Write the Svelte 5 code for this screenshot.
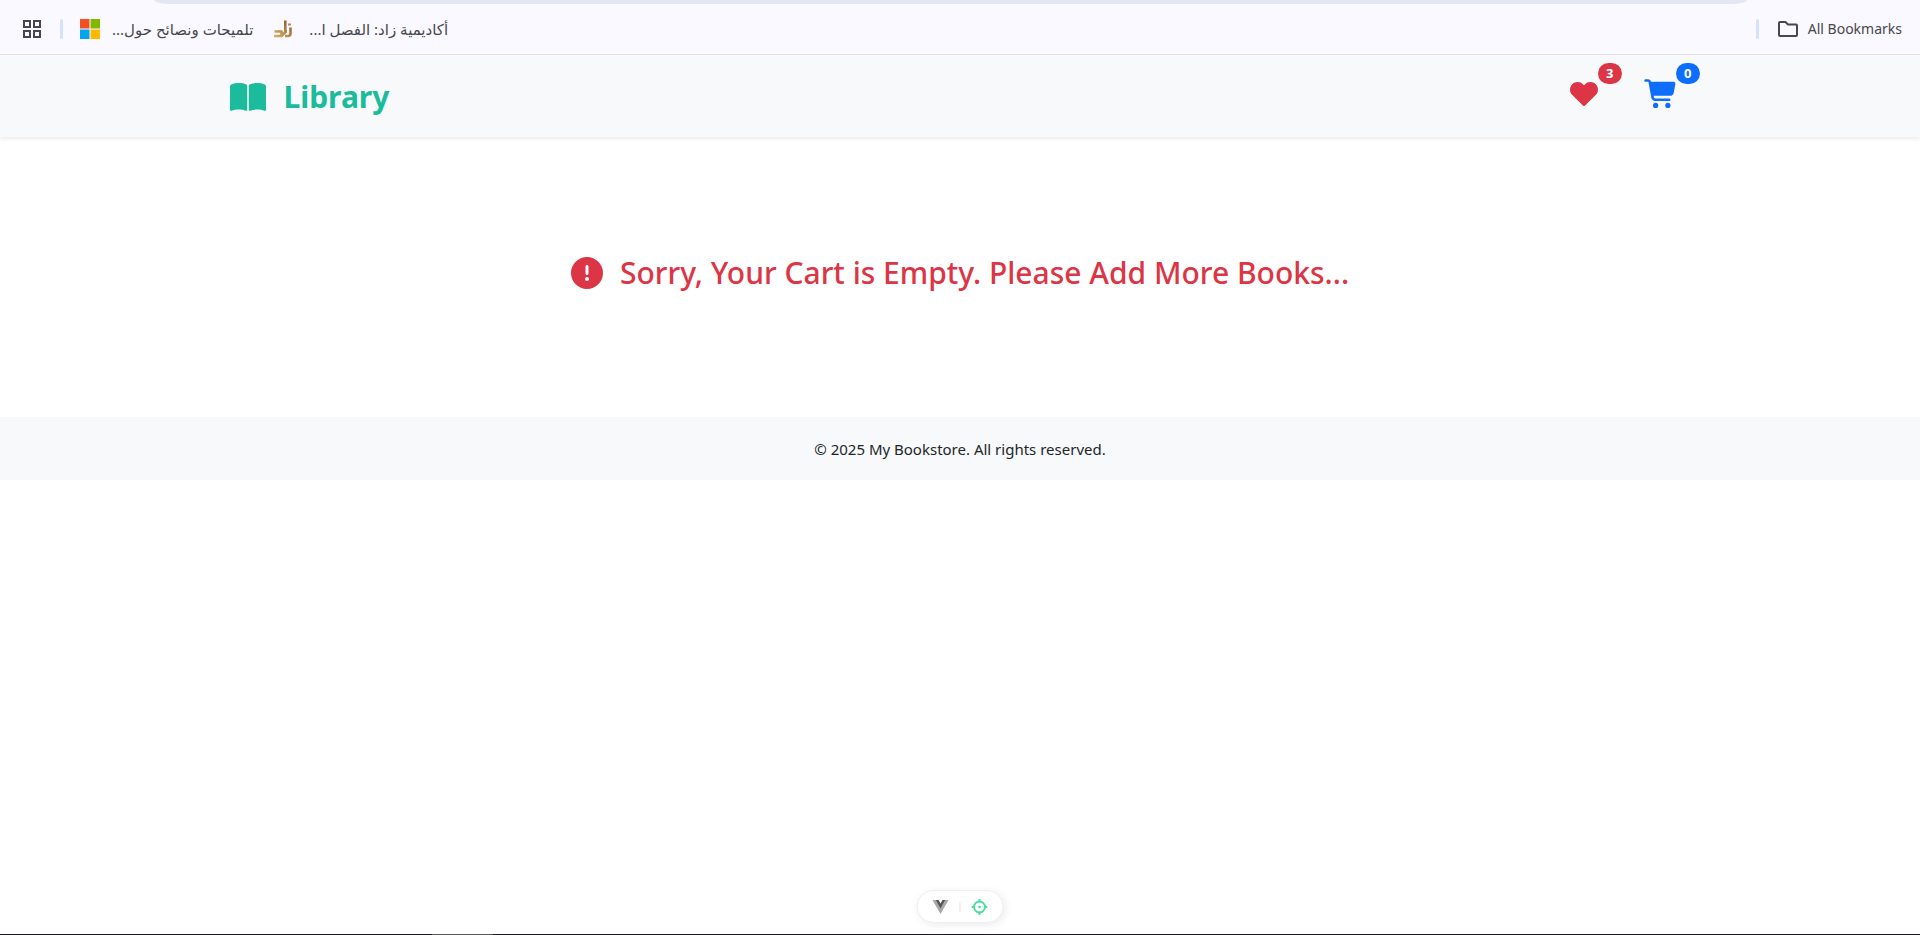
<script>
  const wishlistCount = 3;
  const cartCount = 0;
</script>

<div class="page">
  <nav class="bookmarks" aria-label="Bookmarks">
    <div class="omnibox-edge"></div>
    <button class="apps" aria-label="Apps">
      <svg viewBox="0 0 18 18" width="18" height="18" fill="none" stroke="#47474c" stroke-width="2">
        <rect x="1" y="1" width="6" height="6" /><rect x="11" y="1" width="6" height="6" />
        <rect x="1" y="11" width="6" height="6" /><rect x="11" y="11" width="6" height="6" />
      </svg>
    </button>
    <span class="divider"></span>
    <a class="bookmark first" href="#tips">
      <svg viewBox="0 0 20 20" width="20" height="20" aria-hidden="true">
        <path fill="#f25022" d="M0 0h9.500v9.500H0z" /><path fill="#7fba00" d="M10.500 0H20v9.500h-9.500z" />
        <path fill="#00a4ef" d="M0 10.500h9.500V20H0z" /><path fill="#ffb900" d="M10.500 10.500H20V20h-9.500z" />
      </svg>
      <span dir="rtl">تلميحات ونصائح حول...</span>
    </a>
    <a class="bookmark second" href="#academy">
      <svg viewBox="0 0 20 20" width="20" height="20" fill="none" aria-hidden="true">
        <defs>
          <linearGradient id="gold" gradientUnits="userSpaceOnUse" x1="2" y1="19" x2="15" y2="3">
            <stop offset="0" stop-color="#dcb468" /><stop offset="1" stop-color="#985f2e" />
          </linearGradient>
        </defs>
        <g stroke="url(#gold)" stroke-width="2.600" stroke-linejoin="round">
          <path d="M1.500 12.500h7v4.500H1" />
          <path d="M12.300 1.500V13L8.500 17" />
          <path d="M12 12.500h2" />
          <path d="M17.500 8.500v6q0 2.500-2.500 2.500h-3" />
        </g>
        <path d="M15 4.500h3v2h-3z" fill="#b98b58" />
      </svg>
      <span dir="rtl">أكاديمية زاد: الفصل ا...</span>
    </a>
    <span class="divider end"></span>
    <button class="all">
      <svg viewBox="0 0 20 16" width="20" height="16" fill="none" stroke="#47474c" stroke-width="2" stroke-linejoin="round" aria-hidden="true">
        <path d="M1 2q0-1 1-1h5.500l2.500 2.500h8q1 0 1 1V14q0 1-1 1H2q-1 0-1-1z" />
      </svg>
      <span>All Bookmarks</span>
    </button>
  </nav>

  <header>
    <a class="brand" href="#home">
      <svg viewBox="0 0 36 28" width="36" height="28" fill="currentColor" aria-hidden="true">
        <path d="M0 3.200Q0 2 1.200 1.500C6-.4 12-.5 16 1.300q1.200.6 1.200 1.900V27q0 1.200-1.200.7c-4-1.700-10-1.700-14.600 0Q0 28.200 0 27z" />
        <path d="M36 3.200Q36 2 34.800 1.500C30-.4 24-.5 20 1.300q-1.200.6-1.200 1.900V27q0 1.200 1.200.7c4-1.700 10-1.700 14.600 0q1.400.5 1.400-.7z" />
      </svg>
      <span>Library</span>
    </a>
    <div class="actions">
      <a class="action wish" href="#wishlist" aria-label="Wishlist">
        <svg viewBox="0 0 28 28" width="28" height="28" fill="currentColor">
          <path d="M12.900 25.600L2.300 15.100C-.7 12.100-.7 7.300 2.200 4.300c2.900-3 7.800-3 10.700-.1L14 5.300l1.100-1.100c2.900-2.900 7.800-2.900 10.700.1 2.900 3 2.900 7.800-.1 10.800L15.100 25.600q-1.100 1-2.200 0z" />
        </svg>
        <span class="badge">{wishlistCount}</span>
      </a>
      <a class="action cart" href="#cart" aria-label="Cart">
        <svg viewBox="0 0 576 512" width="32" height="28" fill="currentColor" overflow="visible">
          <path d="M24-16C10.700-16 0-5.300 0 8s10.700 24 24 24h45.300c3.900 0 7.200 2.800 7.900 6.600l52.100 286.300c6.200 34.200 36 59.100 70.800 59.100H456c13.300 0 24-10.700 24-24s-10.700-24-24-24H200.100c-11.600 0-21.500-8.300-23.600-19.700l-5.100-28.300H475c30.800 0 57.200-21.900 62.900-52.200l31-157.900C572.600 50.200 557.500 32 537.400 32H124.700l-.4-2c-4.800-26.600-28-46-55.100-46H24zM208 512a48 48 0 1 0 0-96 48 48 0 1 0 0 96zm224 0a48 48 0 1 0 0-96 48 48 0 1 0 0 96z" />
        </svg>
        <span class="badge">{cartCount}</span>
      </a>
    </div>
  </header>

  <main>
    <h2>
      <svg viewBox="0 0 512 512" width="32" height="32" fill="currentColor" aria-hidden="true">
        <path d="M256 512A256 256 0 1 0 256 0a256 256 0 1 0 0 512zm0-384c13.300 0 24 10.700 24 24v112c0 13.300-10.700 24-24 24s-24-10.700-24-24V152c0-13.300 10.700-24 24-24zm-32 224a32 32 0 1 1 64 0 32 32 0 1 1-64 0z" />
      </svg>
      <span>Sorry, Your Cart is Empty. Please Add More Books...</span>
    </h2>
  </main>

  <footer>© 2025 My Bookstore. All rights reserved.</footer>

  <div class="taskbar-edge"><span></span></div>

  <div class="devtools">
    <button aria-label="Toggle devtools">
      <svg viewBox="0 0 16 14" width="16" height="14">
        <path fill="#a8a8a8" d="M0 0h3.500L8 7.500 12.500 0H16L8 14z" />
        <path fill="#555" d="M3.300 0H6l2 3.500L10 0h2.700L8 8.500z" />
      </svg>
    </button>
    <span class="bar"></span>
    <button aria-label="Inspect component">
      <svg viewBox="0 0 16 16" width="16" height="16" fill="none" stroke="#42e09a" stroke-width="1.800">
        <circle cx="8" cy="8" r="5.500" />
        <circle cx="8" cy="8" r="1.300" fill="#42e09a" stroke="none" />
        <path d="M8 0v3.500M8 12.500V16M0 8h3.500M12.500 8H16" />
      </svg>
    </button>
  </div>
</div>

<style>
  :global(body) {
    margin: 0;
    background: #fff;
  }
  .page {
    min-height: 100vh;
    display: flex;
    flex-direction: column;
    font-family: "Segoe UI", "Noto Sans", "Open Sans", "DejaVu Sans", sans-serif;
    font-size: 15px;
    line-height: 24px;
    color: #212529;
  }
  button {
    border: 0;
    padding: 0;
    background: none;
    font: inherit;
    color: inherit;
    display: flex;
    align-items: center;
    cursor: pointer;
  }
  a {
    color: inherit;
    text-decoration: none;
  }
  svg {
    display: block;
    flex: none;
  }
  .bookmarks {
    position: relative;
    box-sizing: border-box;
    height: 55px;
    padding: 4px 18px 0 23px;
    display: flex;
    align-items: center;
    background: #faf9ff;
    border-bottom: 1px solid #dfe1ec;
    font-size: 14px;
    color: #47474c;
  }
  .omnibox-edge {
    position: absolute;
    top: 0;
    left: 8%;
    right: 9%;
    height: 4px;
    border-radius: 0 0 16px 16px / 0 0 4px 4px;
    background: #e4e7f3;
  }
  .divider {
    width: 3px;
    height: 20px;
    margin-left: 19px;
    border-radius: 2px;
    background: #d3e3fd;
  }
  .bookmark {
    display: flex;
    align-items: center;
    gap: 12px;
    font-size: 15px;
    white-space: nowrap;
  }
  .first {
    margin-left: 17px;
  }
  .second {
    margin-left: 20px;
    gap: 16px;
  }
  .end {
    margin-left: auto;
  }
  .all {
    margin-left: 19px;
    gap: 10px;
    white-space: nowrap;
  }
  header {
    box-sizing: border-box;
    height: 82px;
    padding: 2px 12% 0;
    display: flex;
    align-items: center;
    justify-content: space-between;
    background: #f8f9fb;
    box-shadow: 0 2px 4px rgba(0, 0, 0, 0.08);
  }
  .brand {
    display: flex;
    align-items: center;
    gap: 17px;
    font-size: 30px;
    font-weight: 700;
    line-height: 40px;
    color: #1abc9c;
  }
  .actions {
    display: flex;
    gap: 46px;
    padding: 0 14px 6px 0;
  }
  .action {
    position: relative;
  }
  .wish {
    color: #dc3545;
  }
  .cart {
    color: #0d6efd;
  }
  .badge {
    position: absolute;
    left: 100%;
    bottom: 24px;
    min-width: 8px;
    padding: 0 8px;
    border-radius: 11px;
    background: currentColor;
    font-size: 13px;
    font-weight: 700;
    line-height: 21px;
    text-align: center;
  }
  .badge::first-letter {
    color: #fff;
  }
  main {
    padding: 112px 16px 120px;
  }
  h2 {
    margin: 0;
    display: flex;
    align-items: center;
    justify-content: center;
    gap: 17px;
    font-size: 30px;
    font-weight: 500;
    line-height: 48px;
    color: #dc3545;
  }
  footer {
    padding: 20px 16px 19px;
    background: #f8f9fb;
    text-align: center;
  }
  .taskbar-edge {
    height: 1px;
    margin-top: auto;
    background: #1c1a20;
  }
  .taskbar-edge span {
    display: block;
    width: 61px;
    height: 1px;
    margin-left: 432px;
    background: #55555a;
  }
  .devtools {
    position: fixed;
    left: 50%;
    bottom: 12px;
    transform: translateX(-50%);
    box-sizing: border-box;
    height: 33px;
    padding: 0 15px;
    display: flex;
    align-items: center;
    gap: 11px;
    border: 1px solid #eee;
    border-radius: 17px;
    background: #fff;
    box-shadow: 2px 2px 8px rgba(0, 0, 0, 0.08);
  }
  .bar {
    width: 1px;
    height: 10px;
    background: #e2e2e2;
  }
</style>
